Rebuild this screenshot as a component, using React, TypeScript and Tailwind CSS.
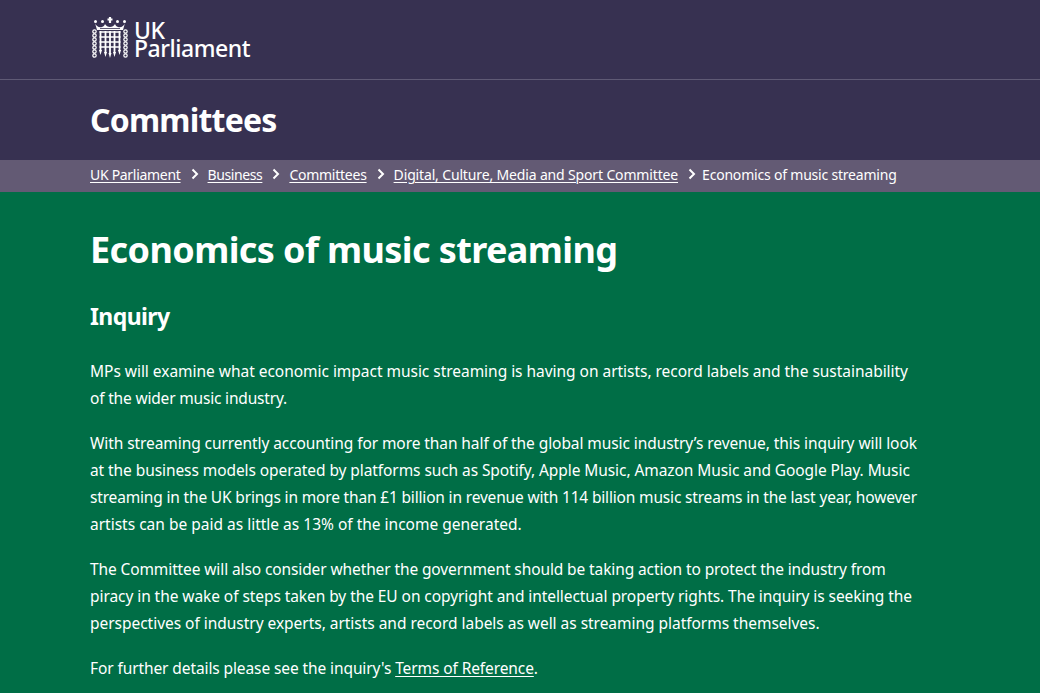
const sans = "font-['Noto_Sans',sans-serif]";

function Portcullis() {
  const chain = [0, 1, 2, 3, 4, 5, 6];
  return (
    <svg width="36" height="41" viewBox="0 0 36 41" fill="none" className="block">
      {/* crown */}
      <path d="M18 0v6M15.500 2.500h5" stroke="#fff" strokeWidth="2.200" />
      <path d="M3 6c1 3 4 5 7 4 1.500-.5 2.500-1.500 3-3 1 2 3 3 5 3s4-1 5-3c.5 1.500 1.500 2.500 3 3 3 1 6-1 7-4l-2 7H5z" fill="#fff" />
      <path d="M8 11.500h20" stroke="#373151" strokeWidth="0.800" />
      <circle cx="3.500" cy="4.500" r="1.500" fill="#fff" />
      <circle cx="32.500" cy="4.500" r="1.500" fill="#fff" />
      <circle cx="10.500" cy="4.500" r="1.500" fill="#fff" />
      <circle cx="25.500" cy="4.500" r="1.500" fill="#fff" />
      {/* chains */}
      {chain.map((i) => (
        <g key={i} stroke="#fff" strokeWidth="1.200">
          <circle cx="2.500" cy={14.500 + i * 4} r="1.700" />
          <circle cx="33.500" cy={14.500 + i * 4} r="1.700" />
        </g>
      ))}
      {/* grille */}
      <path d="M7.500 15h21M7.500 20h21M7.500 25h21M7.500 30h21" stroke="#fff" strokeWidth="1.500" />
      <path d="M8.500 14v20M13.500 14v22M18 14v23M22.500 14v22M27.500 14v20" stroke="#fff" strokeWidth="1.800" />
      <path d="M7 33l1.500 5 1.500-5zM12 35l1.500 5 1.500-5zM16.500 36l1.500 5 1.500-5zM21 35l1.500 5 1.500-5zM26 33l1.500 5 1.500-5z" fill="#fff" />
    </svg>
  );
}

function Crumb({ children, className }: { children: string; className?: string }) {
  return (
    <>
      <a className={`underline underline-offset-2 decoration-1 text-white ${className ?? ""}`}>{children}</a>
      <svg width="8" height="12" viewBox="0 0 8 12" fill="none" className="ml-[10px] mr-[9px] shrink-0">
        <path d="M1.500 1.500L6 6l-4.500 4.500" stroke="#fff" strokeWidth="2" />
      </svg>
    </>
  );
}

export default function App() {
  return (
    <div className={`h-[693px] w-[1040px] overflow-hidden bg-[#006e46] text-white ${sans}`}>
      <header className="bg-[#373151]">
        <div className="flex h-[80px] items-start gap-[6px] pl-[92px] pt-[17px] border-b border-[#5f5a75]">
          <Portcullis />
          <div className="text-[23px] leading-[18px] font-medium tracking-[-0.45px] pt-[4px]">
            UK<br />Parliament
          </div>
        </div>
        <div className="flex h-[80px] items-center pl-[90px]">
          <span className="text-[32px] font-bold leading-none tracking-[-0.8px]">Committees</span>
        </div>
      </header>
      <nav className="flex h-[32px] items-center whitespace-nowrap bg-[#635a74] pb-[4px] pl-[90px] text-[14px] tracking-[-0.15px]">
        <Crumb className="tracking-[-0.3px]">UK Parliament</Crumb>
        <Crumb className="tracking-[-0.4px]">Business</Crumb>
        <Crumb className="tracking-[-0.25px]">Committees</Crumb>
        <Crumb>Digital, Culture, Media and Sport Committee</Crumb>
        <span className="ml-[-3px] tracking-[-0.2px]">Economics of music streaming</span>
      </nav>
      <main className="whitespace-nowrap pl-[90px] pt-[35px] text-[15.500px] leading-[27px]">
        <h1 className="text-[36px] font-bold leading-[46px] tracking-[-0.6px]">Economics of music streaming</h1>
        <h2 className="mt-[28px] text-[23px] font-bold leading-[30px] tracking-[-0.6px]">Inquiry</h2>
        <p className="mt-[27px] tracking-[-0.03px]">
          MPs will examine what economic impact music streaming is having on artists, record labels and the sustainability<br />
          <span className="tracking-[-0.18px]">of the wider music industry.</span>
        </p>
        <p className="mt-[18px] tracking-[-0.08px]">
          With streaming currently accounting for more than half of the global music industry’s revenue, this inquiry will look<br />
          at the business models operated by platforms such as Spotify, Apple Music, Amazon Music and Google Play. Music<br />
          <span className="tracking-[-0.17px]">streaming in the UK brings in more than £1 billion in revenue with 114 billion music streams in the last year, however</span><br />
          <span className="tracking-[0px]">artists can be paid as little as 13% of the income generated.</span>
        </p>
        <p className="mt-[18px] tracking-[-0.07px]">
          <span className="tracking-[-0.11px]">The Committee will also consider whether the government should be taking action to protect the industry from</span><br />
          piracy in the wake of steps taken by the EU on copyright and intellectual property rights. The inquiry is seeking the<br />
          <span className="tracking-[-0.03px]">perspectives of industry experts, artists and record labels as well as streaming platforms themselves.</span>
        </p>
        <p className="mt-[18px] tracking-[-0.1px]">
          For further details please see the inquiry's <a className="underline underline-offset-2 decoration-1">Terms of Reference</a>.
        </p>
      </main>
    </div>
  );
}
